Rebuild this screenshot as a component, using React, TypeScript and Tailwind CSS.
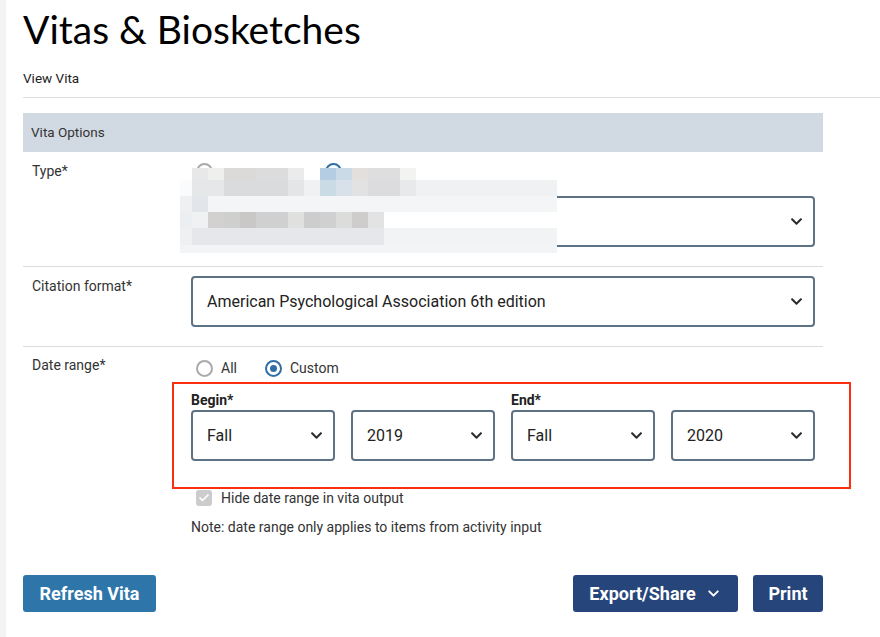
import { ChevronDown, Check } from 'lucide-react'
import { FaChevronDown } from 'react-icons/fa'

type Block = [number, number, string]

// pixelated redaction over the Type field: [x, width, colour] per row, x relative to x=180
const mosaic: { top: number; h: number; blocks: Block[] }[] = [
  {
    top: 0,
    h: 12,
    blocks: [
      [12, 16, '#e8e8e8'], [28, 16, '#efefed'], [44, 32, '#dcdad9'], [76, 32, '#dcdcdc'],
      [108, 16, '#ebebeb'], [140, 16, '#b5cde3'], [156, 16, '#cadae6'], [172, 16, '#e3dfdd'],
      [188, 32, '#dedede'], [220, 16, '#f3f3f1'],
    ],
  },
  {
    top: 12,
    h: 16,
    blocks: [
      [0, 12, '#fafbfc'], [12, 32, '#e6e7e9'], [44, 64, '#dadbdd'], [108, 16, '#e4e5e7'],
      [124, 16, '#f0f1f3'], [140, 16, '#cbdbe5'], [156, 16, '#d8e1e9'], [172, 16, '#e2e2e2'],
      [188, 32, '#dcdcde'], [220, 16, '#e8e9eb'], [236, 141, '#f0f1f3'],
    ],
  },
  {
    top: 28,
    h: 16,
    blocks: [[0, 12, '#eef0f2'], [12, 16, '#e2e6ea'], [28, 349, '#f4f5f7']],
  },
  {
    top: 44,
    h: 16,
    blocks: [
      [0, 12, '#eceff1'], [12, 16, '#f0f1f3'], [28, 16, '#d2d1cf'], [44, 16, '#cfcfcd'],
      [60, 16, '#c9c8c6'], [76, 32, '#d0d0d0'], [108, 16, '#e0e0de'], [124, 16, '#cdcdcd'],
      [140, 16, '#d0d0d0'], [156, 16, '#dcdcda'], [172, 16, '#cecdcb'], [188, 16, '#e3e3e3'],
      [204, 173, '#ffffff'],
    ],
  },
  {
    top: 60,
    h: 17,
    blocks: [[0, 12, '#eef0f2'], [12, 192, '#e6e7ea'], [204, 173, '#f2f3f5']],
  },
  {
    top: 77,
    h: 8,
    blocks: [[0, 377, '#f3f4f6']],
  },
]

function Select({ value, className = '' }: { value: string; className?: string }) {
  return (
    <div
      className={`flex h-[51px] items-center justify-between rounded-[4px] border-2 border-[#5e7286] bg-white pl-[14px] pr-[10px] text-[16px] text-[#222] ${className}`}
    >
      <span>{value}</span>
      <FaChevronDown className="h-[13px] w-[13px] text-[#2b2b2b]" />
    </div>
  )
}

function Radio({ label, checked }: { label: string; checked?: boolean }) {
  return (
    <label className="flex items-center gap-[8px] text-[14px] text-[#333]">
      {checked ? (
        <span className="flex h-[17px] w-[17px] items-center justify-center rounded-full border-[2px] border-[#2f6fa6]">
          <span className="h-[7px] w-[7px] rounded-full bg-[#2f6fa6]" />
        </span>
      ) : (
        <span className="h-[17px] w-[17px] rounded-full border-[2px] border-[#aaaaaa]" />
      )}
      {label}
    </label>
  )
}

export default function App() {
  return (
    <div className="flex min-h-screen bg-white font-['Roboto',sans-serif] text-[#333]">
      <div className="w-[6px] shrink-0 bg-[#f3f3f3]" />
      <div className="flex-1 pl-[17px]">
        <h1 className="pt-[6px] font-['Lato',sans-serif] text-[39px] leading-[46px] text-black">
          Vitas &amp; Biosketches
        </h1>
        <div className="mt-[18px] text-[13.5px] leading-[16px] text-[#222]">View Vita</div>
        <div className="mt-[11px] border-t border-[#dcdcdc]" />

        <div className="mt-[15px] w-[800px]">
          <div className="flex h-[39px] items-center bg-[#d1dae2] px-[8px] text-[13.5px] text-[#333]">
            Vita Options
          </div>

          {/* Type */}
          <div className="relative grid grid-cols-[168px_1fr] border-b border-[#dcdcdc] pb-[19px] pr-[8px] pt-[9px]">
            <div className="pl-[9px] text-[14px] leading-[20px]">Type*</div>
            <div>
              <div className="flex h-[20px] items-center gap-[112px] pl-[5px]">
                <span className="h-[17px] w-[17px] rounded-full border-[2px] border-[#aaaaaa]" />
                <span className="h-[17px] w-[17px] rounded-full border-[2px] border-[#2f6fa6]" />
              </div>
              <Select value="" className="mt-[15px] h-[50px]" />
            </div>
            <div className="pointer-events-none absolute left-[157px] top-[16px] h-[85px] w-[377px]">
              {mosaic.map((row) =>
                row.blocks.map(([x, w, c]) => (
                  <div
                    key={`${row.top}-${x}`}
                    className="absolute"
                    style={{ left: x, top: row.top, width: w, height: row.h, background: c }}
                  />
                )),
              )}
            </div>
          </div>

          {/* Citation format */}
          <div className="grid grid-cols-[168px_1fr] border-b border-[#dcdcdc] pb-[19px] pr-[8px] pt-[9px]">
            <div className="pl-[9px] pt-[2px] text-[14px] leading-[16px]">Citation format*</div>
            <Select value="American Psychological Association 6th edition" className="h-[50px]" />
          </div>

          {/* Date range */}
          <div className="grid grid-cols-[168px_1fr] pr-[8px] pt-[10px]">
            <div className="pl-[9px] text-[14px] leading-[16px]">Date range*</div>
            <div>
              <div className="flex h-[22px] items-center gap-[28px] pl-[5px]">
                <Radio label="All" />
                <Radio label="Custom" checked />
              </div>
              <div className="relative mt-[14px]">
                <div className="grid grid-cols-4 gap-x-[16px]">
                  <div className="col-span-2 text-[14px] font-bold leading-[14px] text-[#222]">Begin*</div>
                  <div className="col-span-2 text-[14px] font-bold leading-[14px] text-[#222]">End*</div>
                  <Select value="Fall" className="mt-[3px]" />
                  <Select value="2019" className="mt-[3px]" />
                  <Select value="Fall" className="mt-[3px]" />
                  <Select value="2020" className="mt-[3px]" />
                </div>
                <div className="pointer-events-none absolute -bottom-[28px] -left-[19px] -right-[36px] -top-[11px] border-2 border-[#fb2e10]" />
              </div>
              <div className="mt-[27px] flex h-[20px] items-center gap-[9px] pl-[5px] text-[14px] text-[#333]">
                <span className="flex h-[16px] w-[16px] items-center justify-center rounded-[3px] bg-[#cccccc]">
                  <Check className="h-[12px] w-[12px] text-white" strokeWidth={3.5} />
                </span>
                Hide date range in vita output
              </div>
              <div className="mt-[11px] text-[14px] leading-[16px] text-[#333]">
                Note: date range only applies to items from activity input
              </div>
            </div>
          </div>

          <div className="mt-[40px] flex items-center justify-between">
            <button className="h-[37px] w-[133px] rounded-[3px] bg-[#2e75a9] text-[18px] font-bold text-white">
              Refresh Vita
            </button>
            <div className="flex gap-[15px]">
              <button className="flex h-[37px] w-[165px] items-center justify-center gap-[9px] rounded-[3px] bg-[#26457a] text-[18px] font-bold text-white">
                Export/Share
                <ChevronDown className="h-[17px] w-[17px]" strokeWidth={2.75} />
              </button>
              <button className="h-[37px] w-[70px] rounded-[3px] bg-[#26457a] text-[18px] font-bold text-white">
                Print
              </button>
            </div>
          </div>
        </div>
      </div>
    </div>
  )
}
